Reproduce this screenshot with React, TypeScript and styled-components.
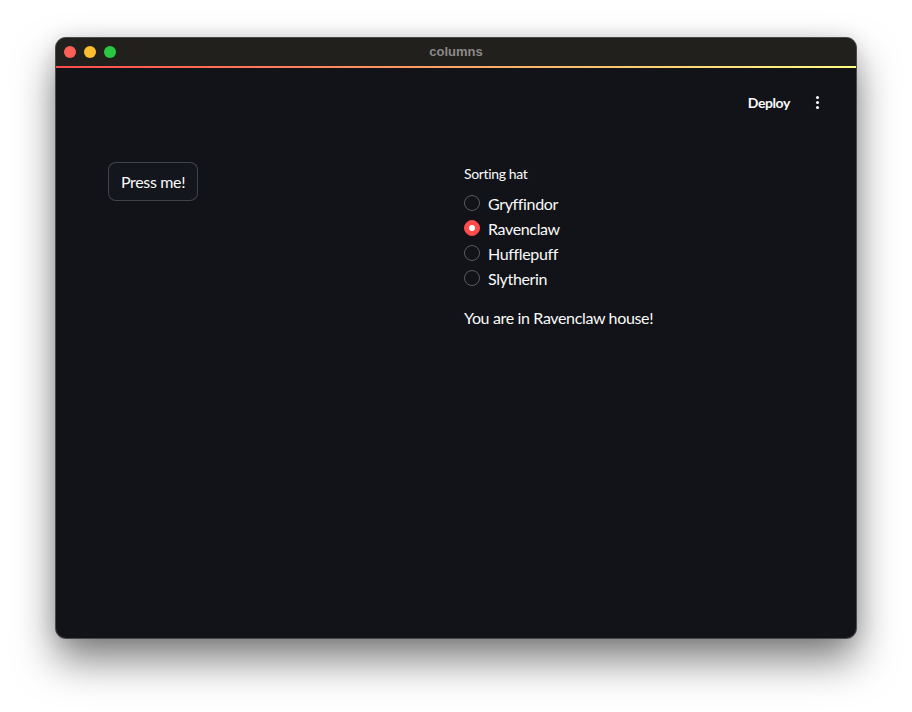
import styled, { createGlobalStyle } from 'styled-components'
import { useState } from 'react'

const GlobalStyle = createGlobalStyle`
  html, body {
    margin: 0;
    padding: 0;
    background: #ffffff;
  }
  body {
    font-family: Lato, "Noto Sans", sans-serif;
  }
`

const Page = styled.div`
  width: 912px;
  height: 712px;
  display: flex;
  justify-content: center;
  padding-top: 38px;
  box-sizing: border-box;
`

const Window = styled.div`
  width: 800px;
  height: 600px;
  border-radius: 10px;
  background: #111318;
  overflow: hidden;
  display: flex;
  flex-direction: column;
  box-shadow: 0 0 0 1px #4a4a4c, 0 22px 40px rgb(0 0 0 / 50%), 0 0 20px rgb(0 0 0 / 12%);
`

const TitleBar = styled.div`
  height: 28px;
  flex-shrink: 0;
  background: #22201d;
  display: flex;
  align-items: center;
  position: relative;
`

const Lights = styled.div`
  display: flex;
  gap: 8px;
  padding-left: 8px;
`

const Light = styled.span<{ color: string }>`
  width: 12px;
  height: 12px;
  border-radius: 50%;
  background: ${({ color }) => color};
`

const Title = styled.div`
  position: absolute;
  left: 0;
  right: 0;
  top: 6px;
  text-align: center;
  font-family: "Liberation Sans", Arial, sans-serif;
  font-weight: 700;
  font-size: 13px;
  color: #8b8a88;
`

const Decoration = styled.div`
  height: 2px;
  flex-shrink: 0;
  background: linear-gradient(90deg, #ff4b4b, #fffd80);
`

const Header = styled.div`
  height: 68px;
  display: flex;
  justify-content: flex-end;
  align-items: center;
  padding: 0 31px 0 0;
  gap: 20px;
`

const Deploy = styled.span`
  font-size: 14px;
  font-weight: 700;
  letter-spacing: -0.4px;
  color: #fafafa;
`

const Kebab = styled.span`
  display: flex;
  flex-direction: column;
  gap: 2px;
  padding: 4px 6px;

  i {
    width: 3px;
    height: 3px;
    border-radius: 50%;
    background: #fafafa;
  }
`

const Main = styled.div`
  width: 696px;
  margin: 26px auto 0;
  display: grid;
  grid-template-columns: 1fr 1fr;
  gap: 16px;
  color: #fafafa;
  letter-spacing: -0.35px;
`

const Column = styled.div`
  display: flex;
  flex-direction: column;
  align-items: flex-start;
`

const Button = styled.button`
  font-family: inherit;
  font-size: 16px;
  font-weight: 400;
  letter-spacing: -0.35px;
  color: #fafafa;
  background: #13161d;
  border: 1px solid rgba(250, 250, 250, 0.2);
  border-radius: 8px;
  height: 39px;
  padding: 0 12px;
  cursor: pointer;
`

const Label = styled.div`
  font-size: 14px;
  margin-top: 3px;
  margin-bottom: 11px;
`

const RadioGroup = styled.div`
  display: flex;
  flex-direction: column;
  gap: 5px;
`

const RadioRow = styled.label`
  display: flex;
  align-items: center;
  gap: 8px;
  height: 20px;
  font-size: 16px;
  cursor: pointer;
`

const Circle = styled.span<{ checked: boolean }>`
  width: 16px;
  height: 16px;
  box-sizing: border-box;
  border-radius: 50%;
  display: flex;
  align-items: center;
  justify-content: center;
  border: 1px solid ${({ checked }) => (checked ? '#ff4b4b' : 'rgba(250,250,250,0.3)')};
  background: ${({ checked }) => (checked ? '#ff4b4b' : 'transparent')};

  &::after {
    content: '';
    width: 6px;
    height: 6px;
    border-radius: 50%;
    background: #ffffff;
    display: ${({ checked }) => (checked ? 'block' : 'none')};
  }
`

const Result = styled.p`
  margin: 20px 0 0;
  font-size: 16px;
`

const HOUSES = ['Gryffindor', 'Ravenclaw', 'Hufflepuff', 'Slytherin']

export default function App() {
  const [house, setHouse] = useState('Ravenclaw')

  return (
    <Page>
      <GlobalStyle />
      <Window>
        <TitleBar>
          <Lights>
            <Light color="#fe5f57" />
            <Light color="#febc2e" />
            <Light color="#28c840" />
          </Lights>
          <Title>columns</Title>
        </TitleBar>
        <Decoration />
        <Header>
          <Deploy>Deploy</Deploy>
          <Kebab>
            <i />
            <i />
            <i />
          </Kebab>
        </Header>
        <Main>
          <Column>
            <Button>Press me!</Button>
          </Column>
          <Column>
            <Label>Sorting hat</Label>
            <RadioGroup>
              {HOUSES.map((h) => (
                <RadioRow key={h} onClick={() => setHouse(h)}>
                  <Circle checked={h === house} />
                  {h}
                </RadioRow>
              ))}
            </RadioGroup>
            <Result>You are in {house} house!</Result>
          </Column>
        </Main>
      </Window>
    </Page>
  )
}
